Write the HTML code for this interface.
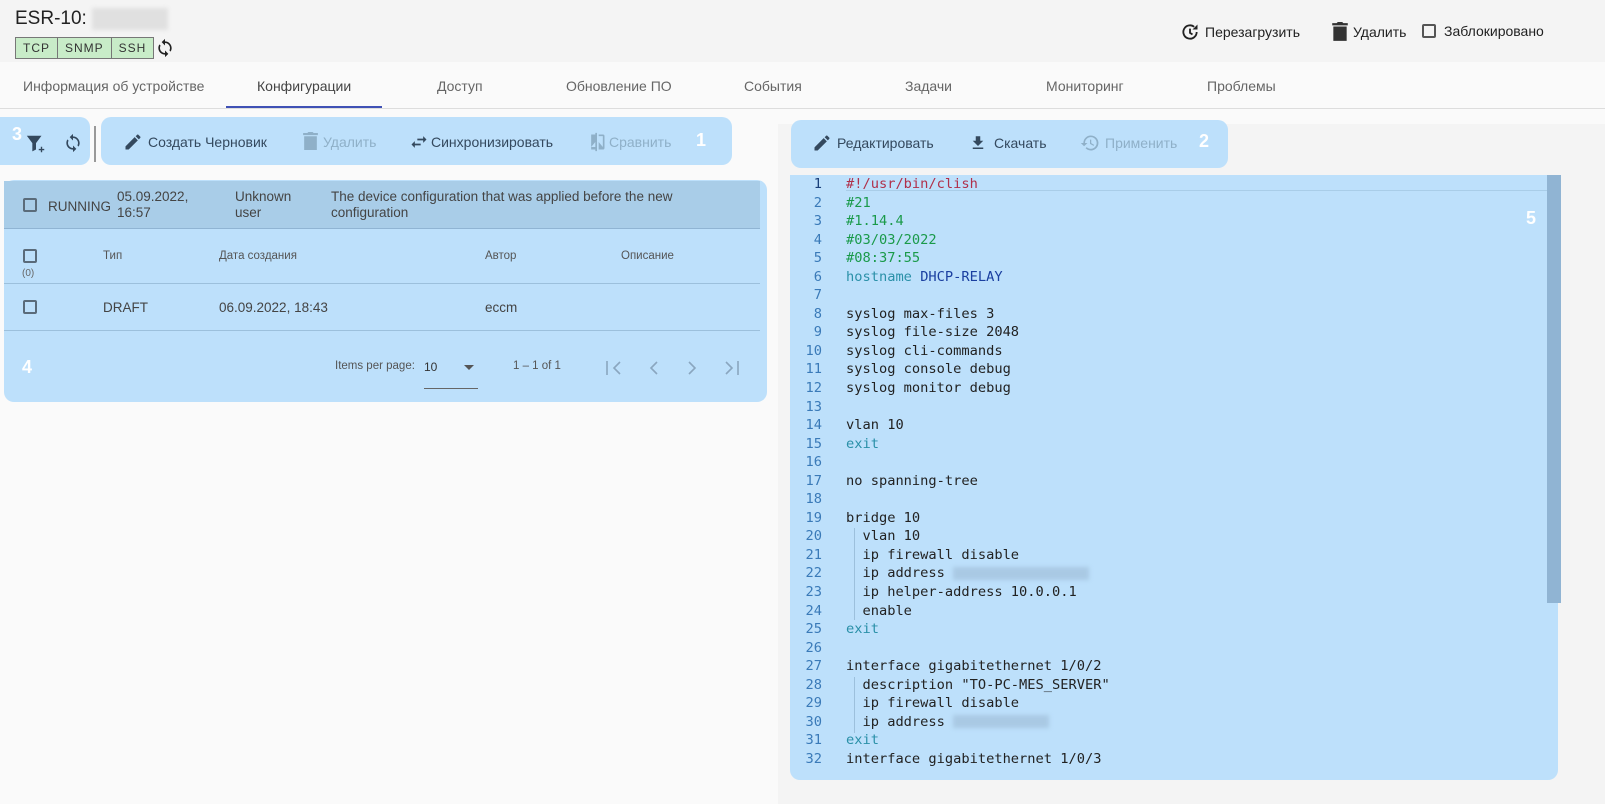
<!DOCTYPE html>
<html><head><meta charset="utf-8"><style>
*{box-sizing:border-box;margin:0;padding:0}
body{width:1605px;height:803px;overflow:hidden;background:#fafafa;font-family:"Liberation Sans",sans-serif;position:relative;color:#333}
.a{position:absolute}
.hdr{left:0;top:0;width:1605px;height:62px;background:#f4f4f4}
.tabs{left:0;top:62px;width:1605px;height:47px;background:#fafafa;border-bottom:1px solid #ddd}
.tab{position:absolute;top:78px;font-size:14px;color:#666;white-space:nowrap}
.blue{background:#bde0fb}
.btn{position:absolute;font-size:14px;color:#34495e;white-space:nowrap;display:flex;align-items:center;gap:5px}
.dis{color:#8fb0c8}
.num{position:absolute;color:#fff;font-weight:bold;font-size:18px}
.code{left:790px;top:175px;width:768px;height:605px;border-radius:0 0 10px 10px;font-family:"DejaVu Sans Mono",monospace;font-size:13.7px}
.ln{position:absolute;left:0;width:32px;text-align:right;color:#3a7ab8}
.tx{position:absolute;left:56px;white-space:pre;color:#222}
.tbl{font-size:13px;color:#444}
.cb{position:absolute;width:14px;height:14px;border:2px solid #5a6b7a;border-radius:2px}
.blur{display:inline-block;height:13px;background:#a9c9e4;filter:blur(2px);vertical-align:middle}
</style></head><body>
<div class="a hdr"></div>
<div class="a" style="left:15px;top:8px;font-size:19px;color:#222">ESR-10: <span style="display:inline-block;width:76px;height:22px;background:#e0e0e0;filter:blur(2px);vertical-align:middle"></span></div>
<div class="a" style="left:15px;top:37px;height:22px;display:flex;font-size:12px;letter-spacing:1px;color:#333">
<div style="background:#c8ecc8;border:1px solid #777;padding:3px 7px">TCP</div><div style="background:#c8ecc8;border:1px solid #777;border-left:0;padding:3px 7px">SNMP</div><div style="background:#c8ecc8;border:1px solid #777;border-left:0;padding:3px 7px">SSH</div></div>
<svg class="a" style="left:155px;top:38px" width="20" height="20" viewBox="0 0 24 24"><path fill="#222" d="M12 4V1L8 5l4 4V6c3.3 0 6 2.7 6 6 0 1-.3 2-.7 2.8l1.5 1.5C19.5 15 20 13.6 20 12c0-4.4-3.6-8-8-8zm0 14c-3.3 0-6-2.7-6-6 0-1 .3-2 .7-2.8L5.2 7.7C4.5 9 4 10.4 4 12c0 4.4 3.6 8 8 8v3l4-4-4-4v3z"/></svg>
<div class="btn" style="left:1180px;top:22px;color:#222"><svg width="20" height="20" viewBox="0 0 24 24"><path fill="none" stroke="#222" stroke-width="2.2" d="M20 12a8 8 0 1 1-3-6.2M12 8v5l3 2"/><path fill="#222" d="M21 3v6h-6z"/></svg>Перезагрузить</div>
<div class="btn" style="left:1332px;top:22px;color:#222"><svg width="16" height="20" viewBox="0 0 14 18"><path fill="#333" d="M1 4h12v13H1zM0 1h4l1-1h4l1 1h4v2H0z"/></svg>Удалить</div>
<div class="cb" style="left:1422px;top:24px;border-color:#555"></div>
<div class="a" style="left:1444px;top:23px;font-size:14px;color:#222">Заблокировано</div>
<div class="a tabs"></div>
<div class="tab" style="left:23px">Информация об устройстве</div>
<div class="tab" style="left:257px;color:#444">Конфигурации</div>
<div class="a" style="left:226px;top:106px;width:156px;height:2px;background:#3f51b5"></div>
<div class="tab" style="left:437px">Доступ</div>
<div class="tab" style="left:566px">Обновление ПО</div>
<div class="tab" style="left:744px">События</div>
<div class="tab" style="left:905px">Задачи</div>
<div class="tab" style="left:1046px">Мониторинг</div>
<div class="tab" style="left:1207px">Проблемы</div>

<div class="a blue" style="left:0;top:117px;width:90px;height:48px;border-radius:0 10px 10px 0"></div>
<div class="num" style="left:12px;top:124px">3</div>
<svg class="a" style="left:25px;top:133px" width="22" height="22" viewBox="0 0 24 24"><path fill="#34495e" d="M2 3h16l-6 8v7l-4 2v-9z"/><path stroke="#34495e" stroke-width="1.5" d="M15 18h6M18 15v6"/></svg>
<svg class="a" style="left:63px;top:133px" width="20" height="20" viewBox="0 0 24 24"><path fill="#34495e" d="M12 4V1L8 5l4 4V6c3.3 0 6 2.7 6 6 0 1-.3 2-.7 2.8l1.5 1.5C19.5 15 20 13.6 20 12c0-4.4-3.6-8-8-8zm0 14c-3.3 0-6-2.7-6-6 0-1 .3-2 .7-2.8L5.2 7.7C4.5 9 4 10.4 4 12c0 4.4 3.6 8 8 8v3l4-4-4-4v3z"/></svg>
<div class="a" style="left:94px;top:126px;width:2px;height:36px;background:#999"></div>
<div class="a blue" style="left:101px;top:117px;width:631px;height:48px;border-radius:10px"></div>
<div class="btn" style="left:123px;top:132px"><svg width="20" height="20" viewBox="0 0 24 24"><path fill="#34495e" d="M3 17.2V21h3.8l11-11-3.8-3.8zM20.7 7c.4-.4.4-1 0-1.4l-2.3-2.3c-.4-.4-1-.4-1.4 0l-1.8 1.8 3.8 3.8z"/></svg>Создать Черновик</div>
<div class="btn dis" style="left:303px;top:132px"><svg width="15" height="19" viewBox="0 0 14 18"><path fill="#8fb0c8" d="M1 4h12v13H1zM0 1h4l1-1h4l1 1h4v2H0z"/></svg>Удалить</div>
<div class="btn" style="left:409px;top:132px;gap:2px"><svg width="20" height="20" viewBox="0 0 24 24"><path fill="#34495e" d="M6.99 11L3 15l3.99 4v-3H14v-2H6.99zM21 9l-3.99-4v3H10v2h7.01v3z"/></svg>Синхронизировать</div>
<div class="btn dis" style="left:587px;top:132px;gap:2px"><svg width="20" height="20" viewBox="0 0 24 24"><path fill="#8fb0c8" d="M10 3H5v18h5v2h2V1h-2zm0 15H5l5-6zM19 3h-5v2h5v13l-5-6v9h5a2 2 0 0 0 2-2V5a2 2 0 0 0-2-2z"/></svg>Сравнить</div>
<div class="num" style="left:696px;top:130px">1</div>

<div class="a" style="left:778px;top:124px;width:827px;height:680px;background:#f4f4f4"></div>
<div class="a blue" style="left:791px;top:120px;width:437px;height:48px;border-radius:10px"></div>
<div class="btn" style="left:812px;top:133px"><svg width="20" height="20" viewBox="0 0 24 24"><path fill="#34495e" d="M3 17.2V21h3.8l11-11-3.8-3.8zM20.7 7c.4-.4.4-1 0-1.4l-2.3-2.3c-.4-.4-1-.4-1.4 0l-1.8 1.8 3.8 3.8z"/></svg>Редактировать</div>
<div class="btn" style="left:969px;top:133px;gap:7px"><svg width="18" height="20" viewBox="0 0 24 24"><path fill="#34495e" d="M19 9h-4V3H9v6H5l7 7zM5 18v2h14v-2z"/></svg>Скачать</div>
<div class="btn dis" style="left:1080px;top:133px"><svg width="20" height="20" viewBox="0 0 24 24"><path fill="#8fb0c8" d="M13 3a9 9 0 0 0-9 9H1l3.9 3.9L9 12H6a7 7 0 1 1 2.1 4.9l-1.4 1.4A9 9 0 1 0 13 3zm-1 5v5l4.3 2.5.7-1.2-3.5-2.1V8z"/></svg>Применить</div>
<div class="num" style="left:1199px;top:131px">2</div>

<div class="a code blue"></div>
<div class="a" style="left:846px;top:190px;width:702px;height:1px;background:#a9cde8"></div>
<div class="a" style="left:1547px;top:175px;width:14px;height:428px;background:#90b4d3"></div>
<div class="num" style="left:1526px;top:208px">5</div>
<div class="a" style="left:854px;top:528px;width:1px;height:92px;background:#9cc0dc"></div>
<div class="a" style="left:854px;top:677px;width:1px;height:56px;background:#9cc0dc"></div>
<div class="a" style="left:790px;top:175px;font-family:'DejaVu Sans Mono',monospace;font-size:13.7px;line-height:18.55px">
<div style="position:relative;height:600px">
<div class="ln" style="top:0;color:#1a3f7a">1<br></div>
<div class="ln" style="top:18.55px">2<br>3<br>4<br>5<br>6<br>7<br>8<br>9<br>10<br>11<br>12<br>13<br>14<br>15<br>16<br>17<br>18<br>19<br>20<br>21<br>22<br>23<br>24<br>25<br>26<br>27<br>28<br>29<br>30<br>31<br>32</div>
<div class="tx"><span style="color:#b0304a">#!/usr/bin/clish</span>
<span style="color:#1a9a4a">#21</span>
<span style="color:#1a9a4a">#1.14.4</span>
<span style="color:#1a9a4a">#03/03/2022</span>
<span style="color:#1a9a4a">#08:37:55</span>
<span style="color:#2a90a8">hostname</span> <span style="color:#1a3fa0">DHCP-RELAY</span>

syslog max-files 3
syslog file-size 2048
syslog cli-commands
syslog console debug
syslog monitor debug

vlan 10
<span style="color:#2a90a8">exit</span>

no spanning-tree

bridge 10
  vlan 10
  ip firewall disable
  ip address <span class="blur" style="width:136px"></span>
  ip helper-address 10.0.0.1
  enable
<span style="color:#2a90a8">exit</span>

interface gigabitethernet 1/0/2
  description "TO-PC-MES_SERVER"
  ip firewall disable
  ip address <span class="blur" style="width:96px"></span>
<span style="color:#2a90a8">exit</span>
interface gigabitethernet 1/0/3</div>
</div></div>

<div class="a blue" style="left:4px;top:180px;width:763px;height:222px;border-radius:10px"></div>
<div class="a" style="left:4px;top:181px;width:756px;height:48px;background:#a9cde8;border-bottom:1px solid #90b4d3"></div>
<div class="cb" style="left:23px;top:198px"></div>
<div class="a tbl" style="left:48px;top:199px;font-size:13.5px">RUNNING</div>
<div class="a tbl" style="left:117px;top:189px;line-height:16px;font-size:13.5px">05.09.2022,<br>16:57</div>
<div class="a tbl" style="left:235px;top:189px;line-height:16px;font-size:13.5px">Unknown<br>user</div>
<div class="a tbl" style="left:331px;top:189px;line-height:16px;font-size:13.5px">The device configuration that was applied before the new<br>configuration</div>
<div class="cb" style="left:23px;top:249px"></div>
<div class="a" style="left:22px;top:268px;font-size:10px;color:#666">(0)</div>
<div class="a" style="left:103px;top:250px;font-size:11.5px;color:#555">Тип</div>
<div class="a" style="left:219px;top:250px;font-size:11.5px;color:#555">Дата создания</div>
<div class="a" style="left:485px;top:250px;font-size:11.5px;color:#555">Автор</div>
<div class="a" style="left:621px;top:250px;font-size:11.5px;color:#555">Описание</div>
<div class="a" style="left:4px;top:283px;width:756px;height:1px;background:#9cc0dc"></div>
<div class="cb" style="left:23px;top:300px"></div>
<div class="a tbl" style="left:103px;top:300px;font-size:13.5px">DRAFT</div>
<div class="a tbl" style="left:219px;top:300px;font-size:13.5px">06.09.2022, 18:43</div>
<div class="a tbl" style="left:485px;top:300px;font-size:13.5px">eccm</div>
<div class="a" style="left:4px;top:330px;width:756px;height:1px;background:#9cc0dc"></div>
<div class="num" style="left:22px;top:357px">4</div>
<div class="a" style="left:335px;top:360px;font-size:11.5px;color:#555">Items per page:</div>
<div class="a" style="left:424px;top:360px;font-size:12px;color:#333">10</div>
<div class="a" style="left:464px;top:365px;width:0;height:0;border-left:5px solid transparent;border-right:5px solid transparent;border-top:5px solid #555"></div>
<div class="a" style="left:424px;top:388px;width:54px;height:1px;background:#666"></div>
<div class="a" style="left:513px;top:360px;font-size:11.5px;color:#555">1 – 1 of 1</div>
<svg class="a" style="left:603px;top:358px" width="140" height="20" viewBox="0 0 140 20"><g fill="none" stroke="#8aa6bf" stroke-width="1.6"><path d="M4 3v14M17 4l-6 6 6 6M54 4l-6 6 6 6M86 4l6 6-6 6M123 4l6 6-6 6M135 3v14"/></g></svg>
</body></html>
